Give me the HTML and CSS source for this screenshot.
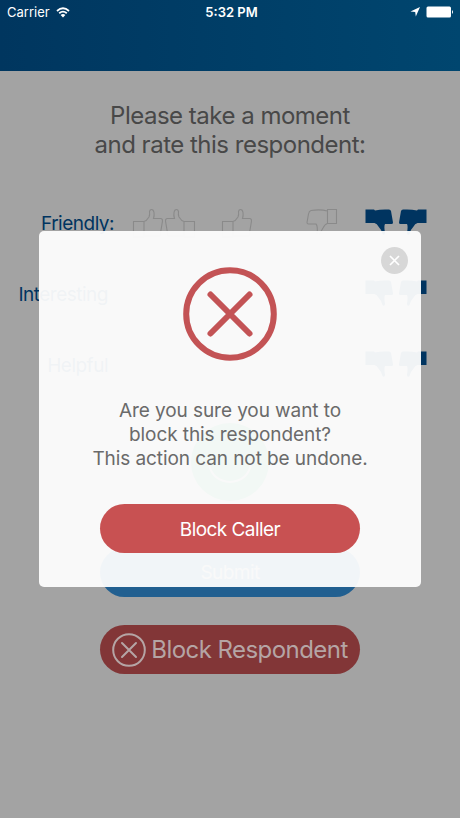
FILE: index.html
```html
<!DOCTYPE html>
<html lang="en">
<head>
<meta charset="UTF-8" />
<meta name="viewport" content="width=device-width, initial-scale=1" />
<title>Rate respondent</title>
<link rel="stylesheet" href="styles.css">
</head>
<body>

<!-- shared icon shapes -->
<svg class="defs" width="0" height="0">
  <symbol id="thumb-down" viewBox="0 0 29 29">
    <path d="M0.5 1.5 H9 L10 2.5 Q16 1 24 1.500 Q25.500 1.500 26 3 L28 14.500 Q28 16 26.500 16 H20 Q18.800 18 20 25 Q19.500 28 17.500 26 Q16.500 21.500 13.800 19 Q12 15.500 9.500 15 H0.500 Z" />
  </symbol>
  <symbol id="thumb-down-outline" viewBox="0 0 32 32">
    <path d="M1.500 1.500 H10.500 V15.500 H1.500 Z M10.500 3 Q18 1 27 2.500 Q29 3 29.500 6 L31 14.500 Q31 16 29.500 16 H22 Q20 18 21 26 M10.500 15.500 Q13 16 15 20 L19 27" />
  </symbol>
  <symbol id="thumb-up" viewBox="0 0 32 32">
    <path d="M1.500 13.500 H12 V29 H1.500 Z M12 13.500 Q14.500 13 17 9 Q18 7 17.500 3.500 Q18 1.500 19.500 1.500 Q21.500 1.500 22 4.500 Q22.500 7.500 21.500 10.500 H29 Q30.800 11 30.500 13 L28 28 H12" />
  </symbol>
</svg>

<div class="screen">
  <header class="header">
    <div class="status">
      <div class="carrier">
        <span>Carrier</span>
        <svg width="14" height="11" viewBox="0 0 14 11">
          <path class="wifi" d="M1 4 Q7 -1.500 13 4 M3.200 6.300 Q7 3 10.800 6.300" />
          <path class="solid" d="M4.600 8 Q7 6 9.400 8 L7 10.500 Z" />
        </svg>
      </div>
      <div class="time">5:32 PM</div>
      <div class="power">
        <svg width="10" height="10" viewBox="0 0 10 10"><path class="solid" d="M10 0 L5.800 9.500 L5.200 5 L0.500 4.500 Z" /></svg>
        <svg width="28" height="12" viewBox="0 0 28 12">
          <rect class="solid" x="0.500" y="0.500" width="24.500" height="11" rx="1.500" />
          <path class="solid" d="M26 4 Q28 6 26 8 Z" />
        </svg>
      </div>
    </div>
  </header>

  <main class="page">
    <h1 class="title">Please take a moment<br>and rate this respondent:</h1>

    <div class="ratings">
      <div class="row">
        <div class="label">Friendly:</div>
        <div class="choices">
          <div class="pair outline up">
            <svg width="32" height="32"><use href="#thumb-up" /></svg>
            <svg class="flip" width="32" height="32"><use href="#thumb-up" /></svg>
          </div>
          <div class="single outline"><svg width="32" height="32"><use href="#thumb-up" /></svg></div>
          <div class="single outline down"><svg class="flip" width="32" height="32"><use href="#thumb-down-outline" /></svg></div>
          <div class="pair chosen">
            <svg width="29" height="29"><use href="#thumb-down" /></svg>
            <svg class="flip" width="29" height="29"><use href="#thumb-down" /></svg>
          </div>
        </div>
      </div>
      <div class="row">
        <div class="label short">Interesting</div>
        <div class="choices">
          <div class="pair chosen">
            <svg width="29" height="29"><use href="#thumb-down" /></svg>
            <svg class="flip" width="29" height="29"><use href="#thumb-down" /></svg>
          </div>
        </div>
      </div>
      <div class="row">
        <div class="label short">Helpful</div>
        <div class="choices">
          <div class="pair chosen">
            <svg width="29" height="29"><use href="#thumb-down" /></svg>
            <svg class="flip" width="29" height="29"><use href="#thumb-down" /></svg>
          </div>
        </div>
      </div>
    </div>

    <div class="face">
      <svg width="78" height="78" viewBox="0 0 78 78">
        <circle class="disc" cx="39" cy="39" r="39" />
        <path class="smile" d="M18 42 Q22 58 39 59 Q56 58 60 42" />
      </svg>
    </div>

    <div class="button submit">Submit</div>
    <div class="button block">
      <svg width="34" height="34" viewBox="0 0 34 34">
        <circle cx="17" cy="17" r="15.800" />
        <path d="M10 10 L24 24 M24 10 L10 24" />
      </svg>
      <span>Block Respondent</span>
    </div>
  </main>

  <div class="modal">
    <div class="close">
      <svg width="11" height="11" viewBox="0 0 11 11"><path d="M1 1 L10 10 M10 1 L1 10" /></svg>
    </div>
    <svg class="warning" width="94" height="94" viewBox="0 0 94 94">
      <circle cx="47" cy="47" r="43.800" />
      <path d="M27.500 27.500 L66.500 66.500 M66.500 27.500 L27.500 66.500" />
    </svg>
    <p class="message">Are you sure you want to<br>block this respondent?<br>This action can not be undone.</p>
    <div class="button confirm">Block Caller</div>
  </div>
</div>

</body>
</html>
```
FILE: styles.css
```css
* {
  box-sizing: border-box;
}
body {
  margin: 0;
  font-family: Inter, "Liberation Sans", sans-serif;
  background: #a3a3a3;
}
svg {
  display: block;
}
.defs {
  position: absolute;
}
.screen {
  position: relative;
  width: 460px;
  height: 818px;
  overflow: hidden;
  background: #a3a3a3;
}

/* --- Header --- */
.header {
  height: 71px;
  background: linear-gradient(90deg, #00365f, #00466f);
}
.status {
  display: grid;
  grid-template-columns: 1fr auto 1fr;
  align-items: center;
  height: 24px;
  padding: 0 6px 0 7px;
  color: #fff;
  font-size: 13px;
}
.carrier {
  display: flex;
  align-items: center;
  gap: 6px;
}
.time {
  padding-left: 2px;
  font-weight: 600;
}
.power {
  display: flex;
  align-items: center;
  justify-content: flex-end;
  gap: 6px;
}
.solid {
  fill: #fff;
}
.wifi {
  fill: none;
  stroke: #fff;
  stroke-width: 1.8;
}

/* --- Rating page --- */
.page {
  padding-top: 30px;
}
.title {
  margin: 0;
  color: #484848;
  font-size: 24px;
  font-weight: 400;
  line-height: 29px;
  letter-spacing: -0.5px;
  text-align: center;
}
.ratings {
  padding-top: 49px;
}
.row {
  display: flex;
  height: 71px;
}
.label {
  width: 114px;
  color: #003460;
  font-size: 19px;
  line-height: 31px;
  letter-spacing: -0.5px;
  text-align: right;
}
.short {
  padding-right: 6px;
}
.choices {
  display: flex;
  flex: 1;
  justify-content: flex-end;
  padding-right: 33px;
}
.pair {
  display: flex;
  gap: 4px;
}
.up {
  gap: 0;
  margin-right: 25px;
}
.down {
  margin: 0 27px 0 53px;
}
.flip {
  transform: scaleX(-1);
}
.outline {
  fill: none;
  stroke: #8a8a8a;
  stroke-width: 1.1;
}
.chosen {
  fill: #003460;
}
.face {
  display: flex;
  justify-content: center;
  height: 127px;
  padding-top: 2px;
}
.disc {
  fill: #2a8f58;
}
.smile {
  fill: none;
  stroke: #a3a3a3;
  stroke-width: 2;
}
.button {
  display: flex;
  align-items: center;
  justify-content: center;
  width: 260px;
  height: 49px;
  margin: 0 auto;
  border-radius: 25px;
  font-size: 19px;
  letter-spacing: -0.55px;
}
.submit {
  background: #215f90;
  color: #a3a3a3;
}
.block {
  gap: 5px;
  margin-top: 28px;
  background: #823637;
  color: #b5a5a5;
  font-size: 24px;
}
.block svg {
  fill: none;
  stroke: #b5a5a5;
  stroke-width: 2;
  stroke-linecap: round;
}

/* --- Confirmation modal --- */
.modal {
  position: absolute;
  top: 231px;
  left: 39px;
  width: 382px;
  height: 356px;
  padding: 16px 13px 0;
  border-radius: 5px;
  background: rgba(254, 254, 254, 0.945);
}
.close {
  display: flex;
  align-items: center;
  justify-content: center;
  width: 27px;
  height: 27px;
  margin-left: auto;
  border-radius: 50%;
  background: #d7d7d7;
}
.close svg {
  stroke: #fff;
  stroke-width: 1.7;
}
.warning {
  margin: -7px auto 0;
  fill: none;
  stroke: #c35355;
  stroke-width: 6;
  stroke-linecap: round;
}
.message {
  margin: 38px -10px 0;
  color: #6a6a6a;
  font-size: 19px;
  line-height: 24px;
  letter-spacing: -0.08px;
  text-align: center;
  white-space: nowrap;
}
.confirm {
  margin-top: 33px;
  padding-top: 2px;
  background: #c85152;
  color: #fff;
}
```
